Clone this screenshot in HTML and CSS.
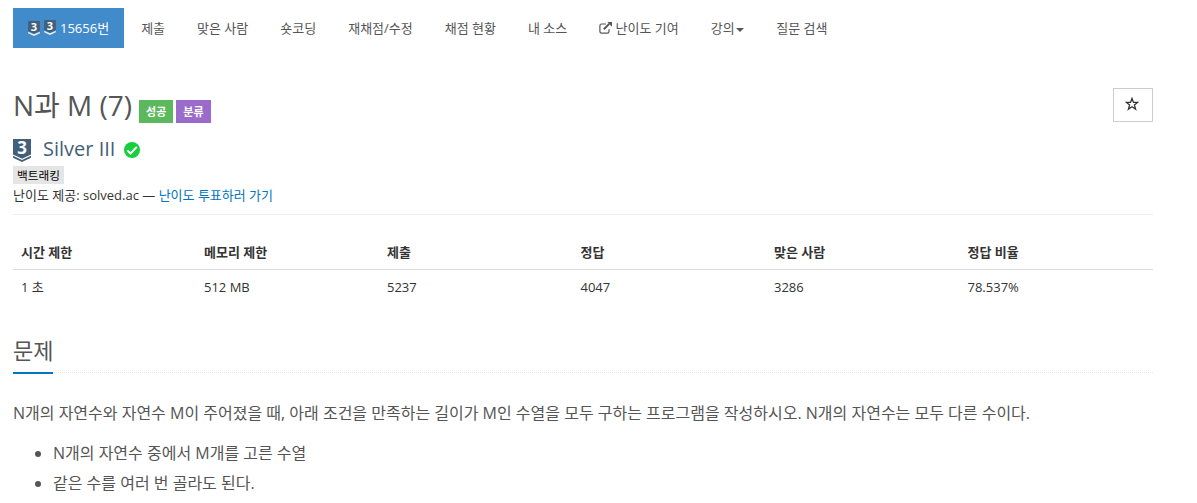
FILE: index.html
```html
<!DOCTYPE html>
<html lang="ko">
<head>
  <meta charset="UTF-8" />
  <meta name="viewport" content="width=device-width, initial-scale=1.0" />
  <title>15656번: N과 M (7)</title>
  <link rel="stylesheet" href="styles.css">
</head>
<body>
  <div class="container">
    <ul class="problem-menu">
      <li class="active"><a href="#">
        <svg class="tier tier-small" viewBox="0 0 18 23"><path class="tier-body" d="M0 0h18v15.5l-9 4.2-9-4.2z" /><path class="tier-edge" d="M0 16.3l9 4.2 9-4.2v2.4L9 23l-9-4.3z" /><text class="tier-num" x="9" y="15" text-anchor="middle">3</text></svg>
        <svg class="tier tier-small tier-up" viewBox="0 0 18 23"><path class="tier-body" d="M0 0h18v15.5l-9 4.2-9-4.2z" /><path class="tier-edge" d="M0 16.3l9 4.2 9-4.2v2.4L9 23l-9-4.3z" /><text class="tier-num" x="9" y="15" text-anchor="middle">3</text></svg>
        15656번
      </a></li>
      <li><a href="#">제출</a></li>
      <li><a href="#">맞은 사람</a></li>
      <li><a href="#">숏코딩</a></li>
      <li><a href="#">재채점/수정</a></li>
      <li><a href="#">채점 현황</a></li>
      <li><a href="#">내 소스</a></li>
      <li><a href="#"><svg class="external" viewBox="0 0 13 12"><path class="external-box" d="M7 2H2.6Q.9 2 .9 3.7v5.7q0 1.7 1.7 1.7h5.7q1.7 0 1.7-1.7V7.2" /><path class="external-line" d="M4.8 7.3l5.4-5.4" /><path class="external-head" d="M8.3 0H13v4.7z" /></svg> 난이도 기여</a></li>
      <li><a href="#">강의<b class="caret"></b></a></li>
      <li><a href="#">질문 검색</a></li>
    </ul>

    <div class="page-header">
      <div class="title-row">
        <h1>N과 M (7)</h1>
        <span class="label label-success">성공</span>
        <span class="label label-tag">분류</span>
        <button class="star"><svg viewBox="0 0 14 14"><path d="M7 1.4l1.5 4h4.1L9.4 8l1.2 4.2L7 9.8l-3.6 2.4L4.6 8 1.4 5.4h4.1z" /></svg></button>
      </div>
      <div class="tier-row">
        <svg class="tier tier-large" viewBox="0 0 18 23"><path class="tier-body" d="M0 0h18v15.5l-9 4.2-9-4.2z" /><path class="tier-edge" d="M0 16.8l9 4.2 9-4.2v1.9L9 23l-9-4.3z" /><text class="tier-num" x="9" y="15" text-anchor="middle">3</text></svg>
        <span class="tier-name">Silver III</span>
        <svg class="check" viewBox="0 0 16 16"><circle cx="8" cy="8" r="8" /><path d="M3.3 8.4l3.2 3.1 6.3-6.6" /></svg>
      </div>
      <div><span class="tag">백트래킹</span></div>
      <div class="provider">난이도 제공: solved.ac — <a href="#">난이도 투표하러 가기</a></div>
    </div>

    <table class="problem-info">
      <thead>
        <tr>
          <th class="narrow">시간 제한</th>
          <th class="narrow">메모리 제한</th>
          <th>제출</th>
          <th>정답</th>
          <th>맞은 사람</th>
          <th>정답 비율</th>
        </tr>
      </thead>
      <tbody>
        <tr>
          <td>1 초</td>
          <td>512 MB</td>
          <td>5237</td>
          <td>4047</td>
          <td>3286</td>
          <td>78.537%</td>
        </tr>
      </tbody>
    </table>

    <div class="headline"><h2>문제</h2></div>
    <div class="problem-text">
      <p>N개의 자연수와 자연수 M이 주어졌을 때, 아래 조건을 만족하는 길이가 M인 수열을 모두 구하는 프로그램을 작성하시오. N개의 자연수는 모두 다른 수이다.</p>
      <ul>
        <li>N개의 자연수 중에서 M개를 고른 수열</li>
        <li>같은 수를 여러 번 골라도 된다.</li>
      </ul>
    </div>
  </div>
</body>
</html>
```
FILE: styles.css
```css
* {
  box-sizing: border-box;
}
body {
  margin: 0;
  font-family: 'Open Sans', 'Noto Sans CJK KR', sans-serif;
  font-size: 13px;
  line-height: 20px;
  color: #333;
  background: #fff;
  overflow: hidden;
}
a {
  color: #0076c0;
  text-decoration: none;
}
h1, h2, p, ul {
  margin: 0;
  padding: 0;
}
.container {
  width: 1140px;
  margin-left: 13px;
  padding-top: 8px;
}

/* menu */
.problem-menu {
  display: flex;
  gap: 2px;
  list-style: none;
}
.problem-menu a {
  display: block;
  height: 40px;
  padding: 10px 15px;
  color: #555;
  white-space: nowrap;
}
.problem-menu .active a {
  display: flex;
  align-items: center;
  gap: 4px;
  color: #fff;
  background: #428bca;
}
.caret {
  display: inline-block;
  margin-left: 1.5px;
  vertical-align: middle;
  border-top: 4px solid #555;
  border-right: 4px solid transparent;
  border-left: 4px solid transparent;
}
.external {
  width: 13px;
  height: 12px;
  vertical-align: -1px;
}
.external path {
  fill: none;
  stroke: #555;
}
.external-box {
  stroke-width: 1.2;
}
.external-line {
  stroke-width: 2;
}
.external .external-head {
  fill: #555;
  stroke: none;
}

/* tier badge */
.tier {
  overflow: visible;
}
.tier-body, .tier-edge {
  fill: #435f7a;
}
.tier-num {
  font: 700 17px 'Open Sans', sans-serif;
  fill: #fff;
}
.tier-small {
  width: 12px;
  height: 15px;
}
.tier-small .tier-edge {
  fill: #e8eef4;
}
.tier-up {
  margin-top: -1px;
}
.tier-large {
  width: 18px;
  height: 23px;
}

/* title */
.page-header {
  height: 167px;
  padding-top: 39px;
  border-bottom: 1px solid #eee;
}
.title-row {
  display: flex;
  height: 45px;
}
h1 {
  margin-right: 7px;
  font-size: 28px;
  font-weight: 400;
  line-height: 37px;
  color: #555;
}
.label {
  height: 23px;
  margin: 13px 3px 0 0;
  padding: 0 7px;
  font-size: 11px;
  font-weight: 700;
  line-height: 23px;
  color: #fff;
}
.label-success {
  background: #5cb85c;
}
.label-tag {
  background: #9b6bcc;
}
.star {
  width: 40px;
  height: 34px;
  margin: 1px 0 0 auto;
  padding: 0 2px 2px 0;
  background: #fff;
  border: 1px solid #ccc;
}
.star svg {
  display: block;
  width: 14px;
  height: 14px;
  margin: 0 auto;
}
.star path {
  fill: none;
  stroke: #333;
  stroke-width: 1.3;
}
.tier-row {
  display: flex;
  align-items: center;
  height: 34px;
  padding-top: 2px;
}
.tier-name {
  margin: -3px 9px 0 12px;
  font-size: 20px;
  font-weight: 400;
  color: #435f7a;
}
.check {
  width: 16px;
  height: 16px;
}
.check circle {
  fill: #16ce3e;
}
.check path {
  fill: none;
  stroke: #fff;
  stroke-width: 2;
}
.tag {
  display: block;
  width: fit-content;
  height: 18px;
  padding: 0 4px;
  font-size: 11.7px;
  line-height: 18px;
  color: #000;
  background: #e5e5e5;
}
.provider {
  margin-top: 1px;
}

/* info table */
.problem-info {
  width: 100%;
  margin-top: 19px;
  table-layout: fixed;
  border-collapse: collapse;
}
.problem-info th, .problem-info td {
  height: 35px;
  padding: 7px 8px;
  text-align: left;
}
.problem-info .narrow {
  width: 183px;
}
.problem-info th {
  padding: 8px 8px 6px;
  border-bottom: 1px solid #ddd;
}

/* problem */
.headline {
  margin-top: 33px;
  border-bottom: 1px dotted #e4e4e4;
}
h2 {
  width: fit-content;
  height: 37px;
  margin-bottom: -2px;
  font-size: 22px;
  font-weight: 400;
  line-height: 26px;
  color: #555;
  border-bottom: 2px solid #0076c0;
}
.problem-text {
  margin-top: 25px;
  font-size: 16px;
  line-height: 30px;
  color: #555;
}
.problem-text ul {
  margin-top: 10px;
  padding-left: 40px;
}
```
